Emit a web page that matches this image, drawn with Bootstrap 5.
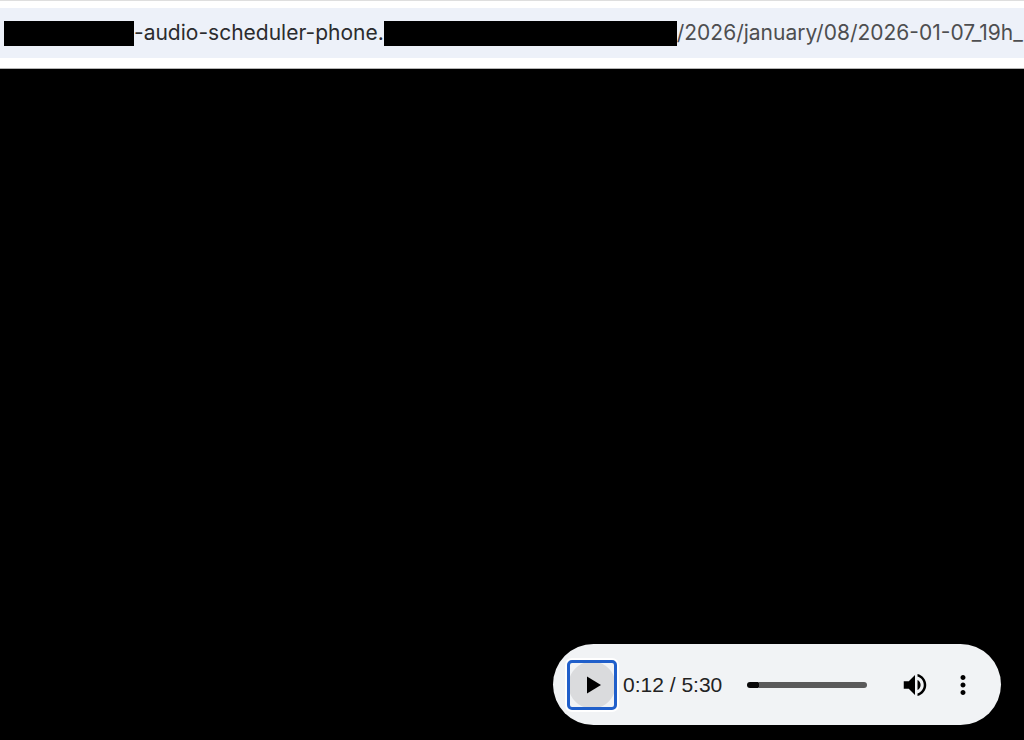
<!DOCTYPE html>
<html lang="en">
<head>
<meta charset="utf-8">
<meta name="viewport" content="width=device-width, initial-scale=1">
<title>Audio recording</title>
<link href="https://cdn.jsdelivr.net/npm/bootstrap@5.3.0/dist/css/bootstrap.min.css" rel="stylesheet">
<style>
  .toolbar { border-top: 1px solid #dedede; border-bottom: 1px solid #b4b4b4; padding: 7px 0 10px; }
  .address { height: 50px; background: #edf1f9; padding-left: 4px; font: 21px/26px Inter, "Liberation Sans", sans-serif; color: #4d4e50; }
  .host { color: #2b2c2e; }
  .hidden-part { height: 25px; background: #000; }
  .part-short { width: 130px; }
  .part-long { width: 293px; }
  .stage { padding: 15px 23px 15px 0; }
  .player { width: 448px; height: 81px; background: #f1f3f5; padding: 0 14px; }
  .play { width: 50px; height: 50px; border: 3px solid #205fca; border-radius: 5px; box-shadow: 0 0 0 2px #fff; background: radial-gradient(circle, #dadbdd 23px, #f1f3f5 24px); }
  .clock { margin-left: 6px; font: 21px/26px "Liberation Sans", sans-serif; color: #222; }
  .seek { appearance: none; width: 120px; height: 6px; margin: 0 0 0 25px; border-radius: 3px; background: radial-gradient(circle at calc(var(--played) - 3px) 3px, #080808 3px, transparent 3px), linear-gradient(to right, #080808 calc(var(--played) - 3px), #5a5a5a calc(var(--played) - 3px)); }
  .seek::-webkit-slider-thumb { appearance: none; width: 0; height: 0; }
  .tool { width: 48px; height: 48px; }
</style>
</head>
<body class="bg-black min-vh-100 d-flex flex-column overflow-hidden">
  <header class="toolbar bg-white">
    <div class="address d-flex align-items-center text-nowrap overflow-hidden">
      <span class="hidden-part part-short flex-shrink-0"></span>
      <span class="host">-audio-scheduler-phone.</span>
      <span class="hidden-part part-long flex-shrink-0"></span>
      <span>/2026/january/08/2026-01-07_19h_</span>
    </div>
  </header>
  <main class="stage flex-grow-1 d-flex align-items-end justify-content-end">
    <div class="player rounded-pill d-flex align-items-center">
      <button type="button" class="play p-0 d-flex align-items-center justify-content-center flex-shrink-0" aria-label="Play">
        <svg width="44" height="44" viewBox="0 0 44 44" aria-hidden="true"><path d="M17 13.500v17L31 22z"/></svg>
      </button>
      <span class="clock text-nowrap">0:12 / 5:30</span>
      <input type="range" class="seek" aria-label="Position" min="0" max="330" value="12" style="--played: 10%">
      <button type="button" class="tool btn p-0 border-0 ms-auto flex-shrink-0 d-flex align-items-center justify-content-center" aria-label="Mute">
        <svg width="30" height="30" viewBox="0 0 24 24" aria-hidden="true"><path d="M3 9v6h4l5 5V4L7 9H3zm13.500 3c0-1.770-1.020-3.290-2.500-4.030v8.050c1.480-.730 2.500-2.250 2.500-4.020zM14 3.230v2.060c2.890.860 5 3.540 5 6.710s-2.110 5.850-5 6.710v2.060c4.010-.910 7-4.490 7-8.770s-2.990-7.860-7-8.770z"/></svg>
      </button>
      <button type="button" class="tool btn p-0 border-0 flex-shrink-0 d-flex align-items-center justify-content-center" aria-label="More options">
        <svg width="30" height="30" viewBox="0 0 24 24" aria-hidden="true"><path d="M12 8c1.100 0 2-.900 2-2s-.900-2-2-2-2 .900-2 2 .900 2 2 2zm0 2c-1.100 0-2 .900-2 2s.900 2 2 2 2-.900 2-2-.900-2-2-2zm0 6c-1.100 0-2 .900-2 2s.900 2 2 2 2-.900 2-2-.900-2-2-2z"/></svg>
      </button>
    </div>
  </main>
<script src="https://cdn.jsdelivr.net/npm/bootstrap@5.3.0/dist/js/bootstrap.bundle.min.js"></script>
</body>
</html>
